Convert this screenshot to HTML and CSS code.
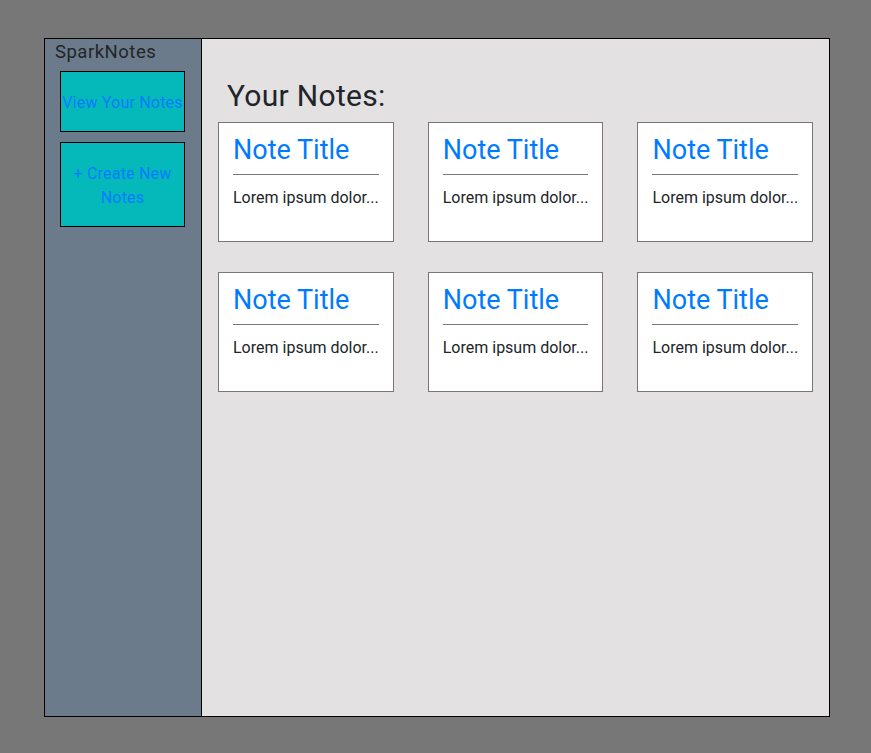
FILE: index.html
```html
<!DOCTYPE html>
<html>
<head>
<meta charset="utf-8">
<link rel="stylesheet" href="styles.css">
</head>
<body>
<div class="app">
  <aside class="sidebar">
    <div class="brand">SparkNotes</div>
    <div class="nav-btn nav-view">View Your Notes</div>
    <div class="nav-btn nav-create">+ Create New Notes</div>
  </aside>
  <main class="main">
    <h1 class="heading">Your Notes:</h1>
    <div class="grid">
      <div class="card"><div class="card-title">Note Title</div><hr class="card-rule"><div class="card-body">Lorem ipsum dolor...</div></div>
      <div class="card"><div class="card-title">Note Title</div><hr class="card-rule"><div class="card-body">Lorem ipsum dolor...</div></div>
      <div class="card"><div class="card-title">Note Title</div><hr class="card-rule"><div class="card-body">Lorem ipsum dolor...</div></div>
      <div class="card"><div class="card-title">Note Title</div><hr class="card-rule"><div class="card-body">Lorem ipsum dolor...</div></div>
      <div class="card"><div class="card-title">Note Title</div><hr class="card-rule"><div class="card-body">Lorem ipsum dolor...</div></div>
      <div class="card"><div class="card-title">Note Title</div><hr class="card-rule"><div class="card-body">Lorem ipsum dolor...</div></div>
    </div>
  </main>
</div>
</body>
</html>
```
FILE: styles.css
```css
html, body {
  margin: 0;
  padding: 0;
}
body {
  background: #777777;
  font-family: Roboto, "Noto Sans", sans-serif;
  color: #212529;
  padding: 38px 41px 36px 44px;
}
.app {
  display: flex;
  width: 786px;
  height: 679px;
  border: 1px solid #000;
  box-sizing: border-box;
}
.sidebar {
  width: 157px;
  flex: none;
  box-sizing: border-box;
  background: #6c7b8b;
  border-right: 1px solid #000;
  display: flex;
  flex-direction: column;
  align-items: flex-start;
  gap: 10px;
}
.brand {
  padding-left: 10px;
  padding-top: 1px;
  font-size: 18.5px;
  letter-spacing: 0.5px;
  line-height: 24px;
  margin-bottom: -3px;
}
.nav-btn {
  width: 125px;
  margin-left: 15px;
  box-sizing: border-box;
  border: 1px solid #000;
  background: #05b9ba;
  color: #007bff;
  font-size: 16px;
  letter-spacing: 0.2px;
  line-height: 24px;
  text-align: center;
  display: flex;
  align-items: center;
  justify-content: center;
  padding-top: 3px;
}
.nav-view {
  height: 61px;
  white-space: nowrap;
}
.nav-create {
  height: 85px;
  padding-left: 10px;
  padding-right: 10px;
}
.main {
  flex: 1;
  background: #e3e1e2;
  padding: 39px 16px 0 16px;
}
.heading {
  margin: 0 0 8px 9px;
  font-size: 30px;
  letter-spacing: 0.3px;
  line-height: 36px;
  font-weight: 400;
  color: #212529;
}
.grid {
  display: grid;
  grid-template-columns: repeat(3, 1fr);
  column-gap: 34px;
  row-gap: 30px;
}
.card {
  height: 120px;
  box-sizing: border-box;
  background: #fff;
  border: 1px solid #777;
  padding: 10px 14px 0 14px;
}
.card-title {
  font-size: 27px;
  line-height: 34px;
  color: #007bff;
  font-weight: 400;
}
.card-rule {
  margin: 7px 0 11px 0;
  border: 0;
  border-top: 1px solid #777;
  height: 0;
}
.card-body {
  font-size: 16px;
  line-height: 24px;
  white-space: nowrap;
}
```
